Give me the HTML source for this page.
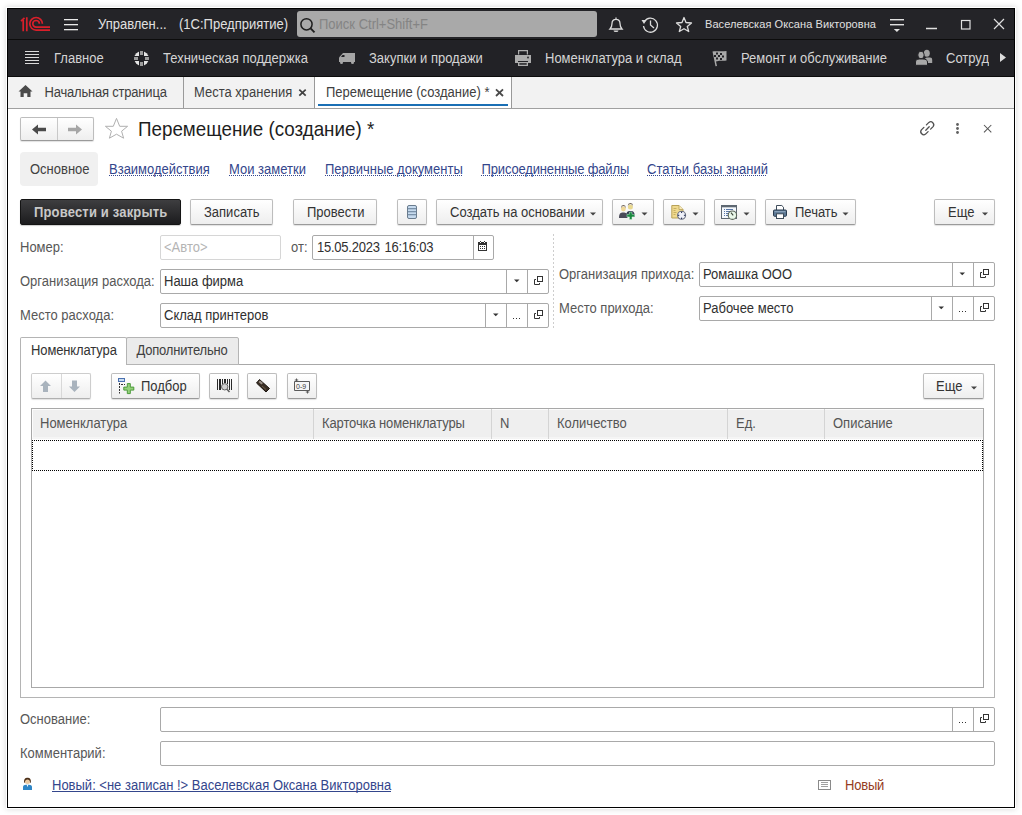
<!DOCTYPE html>
<html><head><meta charset="utf-8">
<style>
*{box-sizing:border-box}
html,body{margin:0;padding:0}
body{width:1022px;height:815px;position:relative;overflow:hidden;background:#fff;font-family:"Liberation Sans",sans-serif;font-size:13px;color:#333}
.a{position:absolute}
.t{position:absolute;white-space:nowrap;line-height:16px;font-size:13px;transform:scaleY(1.1);transform-origin:0 3.5px}
svg{position:absolute;overflow:visible}
.btn{position:absolute;border:1px solid #bdbdbd;border-bottom-color:#9a9a9a;border-radius:2px;background:linear-gradient(#ffffff,#eeeeee);box-shadow:0 1px 1px rgba(0,0,0,.12)}
.fld{position:absolute;border:1px solid #a9a9a9;border-radius:2px;background:#fff}
.dv{position:absolute;top:0;bottom:0;width:1px;background:#a9a9a9}
.lnk{color:#34468c}
.ul{position:absolute;height:1px;background:repeating-linear-gradient(90deg,#34468c 0 1px,transparent 1px 2px)}
.lbl{color:#575757}
</style></head><body>
<!-- window shadow + frame -->
<div class="a" style="left:7px;top:8px;width:1008px;height:800px;border:1px solid #000;background:#fff;box-shadow:0 0 0 1px #fff,0 0 6px 1px rgba(0,0,0,.16)"></div>

<!-- title bar -->
<div class="a" style="left:8px;top:9px;width:1006px;height:30px;background:#242428"></div>
<div class="a" style="left:8px;top:39px;width:1006px;height:1px;background:#0c0c0c"></div>
<!-- menu bar -->
<div class="a" style="left:8px;top:40px;width:1006px;height:36px;background:#222226"></div>
<div class="a" style="left:8px;top:76px;width:1006px;height:1px;background:#0c0c0c"></div>
<!-- tab bar -->
<div class="a" style="left:8px;top:77px;width:1006px;height:31px;background:#f2f2f2"></div>
<div class="a" style="left:8px;top:108px;width:1006px;height:1px;background:#a0a0a0"></div>

<!-- 1C logo -->
<svg class="a" style="left:0;top:0" width="1" height="1">
<g fill="none" stroke="#d91f2a" stroke-width="1.7">
<path d="M23.2 20 V31.2 M26.8 17.2 V31.2"/>
<path d="M21 21.2 L24.5 17.8"/>
<path d="M42.4 23.8 A6.3 6.3 0 1 0 36.1 30.1 H50"/>
<path d="M39.4 23.8 A3.3 3.3 0 1 0 36.1 27.1 H50"/>
</g>
</svg>
<!-- hamburger -->
<svg class="a" style="left:0;top:0" width="1" height="1"><g fill="#eaeaea"><rect x="64" y="19" width="14" height="1.3"/><rect x="64" y="24" width="14" height="1.3"/><rect x="64" y="29" width="14" height="1.3"/></g></svg>
<div class="t" style="left:98px;top:16px;color:#e0e0e0">Управлен...</div>
<div class="t" style="left:179px;top:16px;color:#e0e0e0">(1С:Предприятие)</div>
<!-- search -->
<div class="a" style="left:297px;top:11px;width:300px;height:26px;background:#a9a9a9;border-radius:3px"></div>
<svg class="a" style="left:0;top:0" width="1" height="1"><g fill="none" stroke="#1e1e1e" stroke-width="1.5"><circle cx="306.5" cy="24.3" r="5.6"/><path d="M310.6 28.4 L314.5 32.3" stroke-width="1.9"/></g></svg>
<div class="t" style="left:319px;top:16px;color:#848484">Поиск Ctrl+Shift+F</div>
<!-- bell -->
<svg class="a" style="left:0;top:0" width="1" height="1"><g fill="none" stroke="#dcdcdc" stroke-width="1.3"><path d="M616 17.5 V19 M610 29 C612 27 612 25 612 23.5 C612 21 613.8 19.3 616 19.3 C618.2 19.3 620 21 620 23.5 C620 25 620 27 622 29 Z"/></g><path d="M613.5 30.5 H618.5 A2.5 1.5 0 0 1 613.5 30.5Z" fill="#dcdcdc"/></svg>
<!-- history -->
<svg class="a" style="left:0;top:0" width="1" height="1"><g fill="none" stroke="#dcdcdc" stroke-width="1.3"><path d="M644.5 21.5 A7 7 0 1 1 643.5 26"/><path d="M650.5 20.5 V25 L654 28"/></g><path d="M641.5 20 L646.5 20 L644 24 Z" fill="#dcdcdc"/></svg>
<!-- star -->
<svg class="a" style="left:0;top:0" width="1" height="1"><path d="M684 17.5 L686 22.5 L691.5 23 L687.3 26.5 L688.7 31.5 L684 28.7 L679.3 31.5 L680.7 26.5 L676.5 23 L682 22.5 Z" fill="none" stroke="#dcdcdc" stroke-width="1.3" stroke-linejoin="round"/></svg>
<div class="t" style="left:705px;top:16px;font-size:11px;color:#e0e0e0;letter-spacing:0.08px;transform:none">Васелевская Оксана Викторовна</div>
<!-- filter icon -->
<svg class="a" style="left:0;top:0" width="1" height="1"><g fill="#e0e0e0"><rect x="890" y="19" width="14" height="1.4"/><rect x="890" y="24" width="14" height="1.4"/><path d="M893.8 29 H900 L896.9 32 Z"/></g></svg>
<!-- window controls -->
<svg class="a" style="left:0;top:0" width="1" height="1"><g fill="none" stroke="#e0e0e0" stroke-width="1.2"><path d="M926 28.5 H937" stroke-width="1.5"/><rect x="961.5" y="20.5" width="8.5" height="8.5"/><path d="M994 19 L1004 29 M1004 19 L994 29"/></g></svg>

<!-- menu bar -->
<svg class="a" style="left:0;top:0" width="1" height="1"><g fill="#dadada"><rect x="25" y="51" width="14" height="1"/><rect x="25" y="54" width="14" height="1"/><rect x="25" y="57" width="14" height="1"/><rect x="25" y="60" width="14" height="1"/><rect x="25" y="63" width="14" height="1"/></g></svg>
<div class="t" style="left:54px;top:50px;color:#d4d4d4">Главное</div>
<!-- lifebuoy -->
<svg class="a" style="left:0;top:0" width="1" height="1"><circle cx="141.5" cy="58.5" r="7.3" fill="#e4e4e4"/><g fill="#222226"><rect x="139" y="50" width="5" height="17"/><rect x="133" y="56" width="17" height="5"/></g><g fill="#9c9c9c"><rect x="140" y="51" width="3" height="4"/><rect x="140" y="62" width="3" height="4"/><rect x="134" y="57" width="4" height="3"/><rect x="145" y="57" width="4" height="3"/></g></svg>
<div class="t" style="left:163px;top:50px;color:#d4d4d4">Техническая поддержка</div>
<!-- truck -->
<svg class="a" style="left:0;top:0" width="1" height="1"><path d="M343 53 H355 V62 H339 V57.5 Z" fill="#a6a6a6"/><path d="M342.5 55 H344.5 V57 H341 Z" fill="#222226"/><circle cx="341.5" cy="62.5" r="1.5" fill="#a6a6a6"/><circle cx="352.5" cy="62.5" r="1.5" fill="#a6a6a6"/></svg>
<div class="t" style="left:369px;top:50px;color:#d4d4d4">Закупки и продажи</div>
<!-- printer -->
<svg class="a" style="left:0;top:0" width="1" height="1"><g fill="#acacac"><path d="M518 50 H528 V54.5 H526.8 V51.2 H519.2 V54.5 H518Z"/><path d="M515 55 H531 V63 H528 V61 H518 V63 H515Z"/><path d="M518 62 H528 V66 H518Z"/></g><rect x="519.3" y="63.2" width="7.4" height="1.5" fill="#222226"/><circle cx="528" cy="57.5" r="0.9" fill="#222226"/></svg>
<div class="t" style="left:545px;top:50px;color:#d4d4d4">Номенклатура и склад</div>
<!-- flag -->
<svg class="a" style="left:0;top:0" width="1" height="1"><path d="M712.5 51.5 C716 50.5 720 52 726.5 51 V60.5 C722 61 719 60 716 61.5 L717 66 L715.5 66.2 Z" fill="#a8a8a8"/><g fill="#222226"><rect x="716" y="52.5" width="2" height="2"/><rect x="720" y="53" width="2" height="2"/><rect x="714" y="55" width="2" height="2"/><rect x="718" y="55" width="2" height="2"/><rect x="722" y="55.5" width="2" height="2"/><rect x="716" y="57.5" width="2" height="2"/><rect x="720" y="58" width="2" height="2"/></g></svg>
<div class="t" style="left:741px;top:50px;color:#d4d4d4">Ремонт и обслуживание</div>
<!-- people -->
<svg class="a" style="left:0;top:0" width="1" height="1"><g fill="#a2a2a2"><ellipse cx="926.8" cy="53.3" rx="3" ry="3.5"/><path d="M925 63 V59.5 C925 58 926 57.5 928 57.5 H930 C931.5 57.5 932.2 58.3 932.2 60 V63Z"/></g><g fill="#a8a8a8" stroke="#222226" stroke-width="1"><ellipse cx="921" cy="55" rx="3.2" ry="3.8"/><path d="M915.5 65.3 V62 C915.5 60 917 59 919.5 59 H923 C925.5 59 927.5 60 927.5 62 V65.3Z"/></g></svg>
<div class="t" style="left:946px;top:50px;color:#d4d4d4;width:43px;overflow:hidden">Сотрудники</div>
<svg class="a" style="left:0;top:0" width="1" height="1"><path d="M1000 53 L1006 57.5 L1000 62 Z" fill="#dcdcdc"/></svg>

<!-- tabs -->
<svg class="a" style="left:0;top:0" width="1" height="1"><path d="M25.5 85 L32.5 91.5 H30.5 V97 H27.3 V93.3 H23.7 V97 H20.5 V91.5 H18.5 Z" fill="#4a4a4a"/></svg>
<div class="t" style="left:44.5px;top:84px;color:#404040;letter-spacing:-0.2px">Начальная страница</div>
<div class="a" style="left:183px;top:77px;width:1px;height:31px;background:#9a9a9a"></div>
<div class="t" style="left:194px;top:84px;color:#404040">Места хранения</div>
<svg class="a" style="left:0;top:0" width="1" height="1"><path d="M299.3 89.6 L305.7 95.7 M305.7 89.6 L299.3 95.7" stroke="#404040" stroke-width="1.7"/></svg>
<div class="a" style="left:314px;top:77px;width:1px;height:31px;background:#999"></div>
<div class="a" style="left:315px;top:77px;width:196px;height:31px;background:#fff"></div>
<div class="a" style="left:318px;top:104px;width:190px;height:2px;background:#1a6fb5"></div>
<div class="a" style="left:511px;top:77px;width:1px;height:31px;background:#999"></div>
<div class="t" style="left:326px;top:84px;color:#404040">Перемещение (создание) *</div>
<svg class="a" style="left:0;top:0" width="1" height="1"><path d="M496 89.3 L503 96 M503 89.3 L496 96" stroke="#4a4a4a" stroke-width="1.8"/></svg>

<!-- form header -->
<div class="btn" style="left:20px;top:117px;width:74px;height:24px;"></div>
<div class="a" style="left:57px;top:118px;width:1px;height:22px;background:#c8c8c8"></div>
<svg class="a" style="left:0;top:0" width="1" height="1"><path d="M32 129.5 L38 124.5 V127.8 H46 V131.2 H38 V134.5 Z" fill="#4a4a4a"/><path d="M82 129.5 L76 124.5 V127.8 H68 V131.2 H76 V134.5 Z" fill="#a6a6a6"/></svg>
<svg class="a" style="left:0;top:0" width="1" height="1"><path d="M116.5 118.4 L119.7 126.3 L127.6 126.3 L121.6 131.2 L123.6 138.2 L116.5 134.2 L109.4 138.2 L111.4 131.2 L105.4 126.3 L113.3 126.3 Z" fill="none" stroke="#b0b0b0" stroke-width="1" stroke-linejoin="miter"/></svg>
<div class="t" style="left:138px;top:118px;font-size:18.8px;line-height:22px;color:#1e1e1e">Перемещение (создание) *</div>
<!-- link icon -->
<svg class="a" style="left:0;top:0" width="1" height="1"><g fill="none" stroke="#505050" stroke-width="1.3" stroke-linecap="round"><path d="M926.4 124.9 L928.9 122.4 A3 3 0 0 1 933.1 126.6 L930.6 129.1"/><path d="M928.1 131.6 L925.6 134.1 A3 3 0 0 1 921.4 129.9 L923.9 127.4"/><path d="M925.8 130.2 L929.2 126.8"/></g></svg>
<svg class="a" style="left:0;top:0" width="1" height="1"><g fill="#606060"><circle cx="957.5" cy="124.5" r="1.4"/><circle cx="957.5" cy="128.5" r="1.4"/><circle cx="957.5" cy="132.5" r="1.4"/></g></svg>
<svg class="a" style="left:0;top:0" width="1" height="1"><path d="M984 125 L991.3 132.3 M991.3 125 L984 132.3" stroke="#555" stroke-width="1.05"/></svg>

<!-- nav section -->
<div class="a" style="left:20px;top:152px;width:78px;height:34px;background:#f0f0f0;border-radius:4px"></div>
<div class="t" style="left:30px;top:161px;color:#404040">Основное</div>
<div class="t lnk" style="left:109px;top:161px;line-height:12px;padding-top:2px">Взаимодействия</div>
<div class="t lnk" style="left:229px;top:161px;line-height:12px;padding-top:2px">Мои заметки</div>
<div class="t lnk" style="left:325px;top:161px;line-height:12px;padding-top:2px">Первичные документы</div>
<div class="t lnk" style="left:481.5px;top:161px;line-height:12px;padding-top:2px;letter-spacing:-0.15px">Присоединенные файлы</div>
<div class="t lnk" style="left:647px;top:161px;line-height:12px;padding-top:2px">Статьи базы знаний</div>

<div class="ul" style="left:109px;top:175px;width:100px"></div>
<div class="ul" style="left:229px;top:175px;width:76px"></div>
<div class="ul" style="left:325px;top:175px;width:137px"></div>
<div class="ul" style="left:481px;top:175px;width:147px"></div>
<div class="ul" style="left:647px;top:175px;width:120px"></div>
<!-- command bar -->
<div class="a" style="left:20px;top:199px;width:161px;height:26px;border-radius:2px;background:linear-gradient(#3e3e40,#1c1c1e);border:1px solid #141414;box-shadow:0 1px 1px rgba(0,0,0,.2)"></div>
<div class="t" style="left:34px;top:204px;font-weight:bold;color:#c8c8c8;letter-spacing:0.17px">Провести и закрыть</div>
<div class="btn" style="left:190px;top:199px;width:83px;height:26px"></div>
<div class="t" style="left:204px;top:204px;color:#333">Записать</div>
<div class="btn" style="left:293px;top:199px;width:84px;height:26px"></div>
<div class="t" style="left:307px;top:204px;color:#333">Провести</div>
<div class="btn" style="left:397px;top:199px;width:30px;height:26px"></div>
<svg class="a" style="left:0;top:0" width="1" height="1"><rect x="407.5" y="205.5" width="9" height="13" rx="1.5" fill="#c6daee" stroke="#6a7c8e" stroke-width="1"/><g fill="#7a92aa"><rect x="408" y="208" width="8" height="1.3"/><rect x="408" y="211" width="8" height="1.3"/><rect x="408" y="214" width="8" height="1.3"/></g></svg>
<div class="btn" style="left:436px;top:199px;width:167px;height:26px"></div>
<div class="t" style="left:450px;top:204px;color:#333">Создать на основании</div>
<div class="btn" style="left:612px;top:199px;width:42px;height:26px"></div>
<div class="btn" style="left:663px;top:199px;width:42px;height:26px"></div>
<div class="btn" style="left:714px;top:199px;width:42px;height:26px"></div>
<div class="btn" style="left:765px;top:199px;width:91px;height:26px"></div>
<div class="t" style="left:795px;top:204px;color:#333">Печать</div>
<div class="btn" style="left:934px;top:199px;width:61px;height:26px"></div>
<div class="t" style="left:948px;top:204px;color:#333">Еще</div>
<svg class="a" style="left:0;top:0" width="1" height="1"><g fill="#444"><path d="M590 212.5 H596 L593 215.5Z"/><path d="M641.5 212.5 H647.5 L644.5 215.5Z"/><path d="M692.5 212.5 H698.5 L695.5 215.5Z"/><path d="M743.5 212.5 H749.5 L746.5 215.5Z"/><path d="M842.5 212.5 H848.5 L845.5 215.5Z"/><path d="M982 212.5 H988 L985 215.5Z"/></g></svg>
<!-- users-add icon -->
<svg class="a" style="left:0;top:0" width="1" height="1">
<path d="M619 218 C619 213.5 620.5 212.5 623.3 212.5 C626 212.5 627.5 213.5 627.5 218Z" fill="#4a4a58"/>
<circle cx="623.4" cy="209" r="2.4" fill="#f0d898"/><path d="M621 208.5 A2.4 2.4 0 0 1 625.8 208.5 L625.8 207.5 A2.4 2.2 0 0 0 621 207.5Z" fill="#3a2a1a"/>
<path d="M626 217 C626 212 627.5 211 630.4 211 C633.3 211 634.8 212 634.8 217Z" fill="#2a3448"/>
<circle cx="630.4" cy="207" r="2.5" fill="#e8d890"/><path d="M627.9 206.6 A2.5 2.5 0 0 1 632.9 206.6 L632.9 205.5 A2.5 2.3 0 0 0 627.9 205.5Z" fill="#3a2a1a"/>
<path d="M629.4 212 H632 V214.3 H634.5 V216.9 H632 V219.5 H629.4 V216.9 H626.9 V214.3 H629.4Z" fill="#1a8a40" stroke="#d8f0e0" stroke-width=".5"/>
</svg>
<!-- doc-clock icon -->
<svg class="a" style="left:0;top:0" width="1" height="1">
<path d="M671.8 205.5 H679 L683 209.5 V218 H671.8Z" fill="#efd98e" stroke="#b8a258" stroke-width="1"/>
<path d="M679 205.5 V209.5 H683" fill="#f8ecc0" stroke="#b8a258" stroke-width=".8"/>
<g fill="#c8b060"><rect x="673.5" y="208" width="3" height="1"/><rect x="673.5" y="210" width="2" height="1"/><rect x="673.5" y="212" width="3" height="1"/><rect x="673.5" y="214" width="2" height="1"/></g>
<circle cx="681.6" cy="215.3" r="4" fill="#eef0f8" stroke="#6a7080" stroke-width="1.1"/>
<g fill="#1e2a50"><rect x="681.1" y="211.6" width="1" height="1.4"/><rect x="681.1" y="217.6" width="1" height="1.4"/><rect x="677.9" y="214.8" width="1.4" height="1"/><rect x="683.9" y="214.8" width="1.4" height="1"/></g>
</svg>
<!-- list-clock icon -->
<svg class="a" style="left:0;top:0" width="1" height="1">
<rect x="721.5" y="205.5" width="15" height="13" fill="#f4f8fc" stroke="#5e6872" stroke-width="1"/>
<rect x="721.5" y="205.5" width="15" height="1.8" fill="#5e6872"/>
<g fill="#5a78a8"><rect x="724" y="209" width="1" height="1"/><rect x="726" y="209" width="7" height="1"/><rect x="724" y="211" width="1" height="1"/><rect x="726" y="211" width="4" height="1"/><rect x="724" y="213" width="1" height="1"/><rect x="726" y="213" width="3" height="1"/><rect x="724" y="215" width="1" height="1"/><rect x="726" y="215" width="2" height="1"/></g>
<circle cx="732.4" cy="215.2" r="4.2" fill="#eaf8ea" stroke="#5a6458" stroke-width="1.1"/>
<path d="M731 212.6 L733.2 215.4" stroke="#3a4438" stroke-width="1.1" fill="none"/>
</svg>
<!-- printer icon -->
<svg class="a" style="left:0;top:0" width="1" height="1">
<path d="M776.5 210 V205.5 H781.8 L783.5 207.2 V210" fill="#fff" stroke="#3e4c5a" stroke-width="1"/>
<rect x="773.5" y="210" width="13" height="6.3" rx="1" fill="#5c7894" stroke="#2a3c50" stroke-width="1"/>
<rect x="774.5" y="211" width="11" height="1.2" fill="#8aa2ba"/>
<rect x="776.5" y="213.8" width="7" height="4.7" fill="#fff" stroke="#3e4c5a" stroke-width="1"/>
</svg>

<!-- fields -->
<div class="t lbl" style="left:20px;top:239px">Номер:</div>
<div class="fld" style="left:160px;top:235px;width:121px;height:25px;border-color:#d6d6d6"></div>
<div class="t" style="left:164px;top:239px;color:#b4b4b4">&lt;Авто&gt;</div>
<div class="t lbl" style="left:291px;top:239px">от:</div>
<div class="fld" style="left:312px;top:235px;width:182px;height:25px">
  <div class="dv" style="left:160px"></div>
</div>
<div class="t" style="left:317px;top:239px;color:#303030;letter-spacing:-0.24px;word-spacing:1.4px">15.05.2023 16:16:03</div>
<svg class="a" style="left:0;top:0" width="1" height="1"><g fill="#333"><rect x="478" y="242" width="9" height="9"/><rect x="480" y="241" width="1" height="1"/><rect x="484" y="241" width="1" height="1"/></g><g fill="#fff"><rect x="479" y="245" width="7" height="5"/><rect x="480" y="242" width="1" height="1"/><rect x="484" y="242" width="1" height="1"/></g><g fill="#333"><rect x="480" y="246" width="1" height="1"/><rect x="482" y="246" width="1" height="1"/><rect x="484" y="246" width="1" height="1"/><rect x="480" y="248" width="1" height="1"/><rect x="482" y="248" width="1" height="1"/><rect x="484" y="248" width="1" height="1"/></g></svg>

<div class="t lbl" style="left:20px;top:273px">Организация расхода:</div>
<div class="fld" style="left:160px;top:269px;width:389px;height:25px">
  <div class="dv" style="left:345px"></div><div class="dv" style="left:366px"></div>
</div>
<div class="t" style="left:164px;top:273px;color:#303030">Наша фирма</div>

<div class="t lbl" style="left:20px;top:307px">Место расхода:</div>
<div class="fld" style="left:160px;top:303px;width:389px;height:25px">
  <div class="dv" style="left:324px"></div><div class="dv" style="left:345px"></div><div class="dv" style="left:366px"></div>
</div>
<div class="t" style="left:164px;top:307px;color:#303030">Склад принтеров</div>

<div class="a" style="left:553px;top:234px;width:1px;height:94px;background:repeating-linear-gradient(#cdcdcd 0 2px,transparent 2px 4px)"></div>

<div class="t lbl" style="left:559px;top:266px">Организация прихода:</div>
<div class="fld" style="left:699px;top:262px;width:296px;height:25px">
  <div class="dv" style="left:252px"></div><div class="dv" style="left:273px"></div>
</div>
<div class="t" style="left:703px;top:266px;color:#303030">Ромашка ООО</div>

<div class="t lbl" style="left:559px;top:300px">Место прихода:</div>
<div class="fld" style="left:699px;top:296px;width:296px;height:25px">
  <div class="dv" style="left:231px"></div><div class="dv" style="left:252px"></div><div class="dv" style="left:273px"></div>
</div>
<div class="t" style="left:703px;top:300px;color:#303030">Рабочее место</div>

<!-- field button glyphs -->
<svg class="a" style="left:0;top:0" width="1" height="1"><g fill="#333">
<path d="M514 279.5 H519.5 L516.75 282.3Z"/>
<path d="M493 313.5 H498.5 L495.75 316.3Z"/>
<path d="M959.5 272.5 H965 L962.25 275.3Z"/>
<path d="M938.5 306.5 H944 L941.25 309.3Z"/>
<rect x="513" y="318" width="1" height="1"/><rect x="516" y="318" width="1" height="1"/><rect x="519" y="318" width="1" height="1"/>
<rect x="959" y="311" width="1" height="1"/><rect x="962" y="311" width="1" height="1"/><rect x="965" y="311" width="1" height="1"/>
</g>
<g fill="none" stroke="#333" stroke-width="1">




</g></svg>

<svg class="a" style="left:0;top:0" width="1" height="1"><g fill="none" stroke="#333" stroke-width="1"><path d="M536 279.5 H534.5 V284.5 H539.5 V283"/><rect x="537.5" y="276.5" width="5" height="5"/><path d="M536 313.5 H534.5 V318.5 H539.5 V317"/><rect x="537.5" y="310.5" width="5" height="5"/><path d="M982 272.5 H980.5 V277.5 H985.5 V276"/><rect x="983.5" y="269.5" width="5" height="5"/><path d="M982 306.5 H980.5 V311.5 H985.5 V310"/><rect x="983.5" y="303.5" width="5" height="5"/></g></svg>
<!-- tab panel -->
<div class="a" style="left:20px;top:364px;width:975px;height:334px;border:1px solid #b4b4b4;border-top-color:#a8a8a8"></div>
<div class="a" style="left:126px;top:337px;width:113px;height:28px;border:1px solid #b4b4b4;border-radius:2px 2px 0 0;background:#ebebeb"></div>
<div class="a" style="left:20px;top:337px;width:107px;height:28px;border:1px solid #b4b4b4;border-bottom:none;border-radius:2px 2px 0 0;background:#fff"></div>
<div class="t" style="left:31px;top:342px;color:#333;letter-spacing:-0.12px">Номенклатура</div>
<div class="t" style="left:136.5px;top:342px;color:#404040;letter-spacing:-0.2px">Дополнительно</div>

<!-- table toolbar -->
<div class="btn" style="left:31px;top:373px;width:60px;height:26px;border-color:#cdcdcd;border-bottom-color:#b0b0b0"></div>
<div class="a" style="left:61px;top:374px;width:1px;height:24px;background:#d8d8d8"></div>
<svg class="a" style="left:0;top:0" width="1" height="1"><g fill="#a9b3bd"><path d="M45.5 380.5 L51 386 H48 V392 H43 V386 H40Z"/><path d="M74.5 392 L80 386.5 H77 V380.5 H72 V386.5 H69Z"/></g></svg>
<div class="btn" style="left:111px;top:373px;width:89px;height:26px"></div>
<svg class="a" style="left:0;top:0" width="1" height="1">
<rect x="118.5" y="378.5" width="6" height="3" fill="#c8dcf0" stroke="#4a70b0" stroke-width="1"/>
<g fill="#333"><rect x="119" y="383" width="1" height="2"/><rect x="119" y="386" width="1" height="2"/><rect x="119" y="389" width="1" height="2"/><rect x="119" y="392" width="1" height="1.5"/><rect x="121" y="384" width="2" height="1"/><rect x="124" y="384" width="1" height="1"/></g>
<path d="M127.3 383.6 H130.3 V387.1 H133.8 V390.1 H130.3 V393.6 H127.3 V390.1 H123.8 V387.1 H127.3Z" fill="#94d07a" stroke="#4a9a3a" stroke-width="1"/>
</svg>
<div class="t" style="left:141px;top:378px;color:#333">Подбор</div>
<div class="btn" style="left:209px;top:373px;width:30px;height:26px"></div>
<svg class="a" style="left:0;top:0" width="1" height="1"><g fill="#2a2a2a"><rect x="217" y="379" width="1" height="11"/><rect x="219" y="379" width="2" height="11"/><rect x="222" y="379" width="1" height="5"/><rect x="224" y="379" width="2" height="4"/><rect x="227" y="379" width="1" height="5"/><rect x="229" y="379" width="1" height="11"/><rect x="231" y="379" width="1" height="11"/></g><circle cx="224.7" cy="386.8" r="3.2" fill="#d0d0d0" stroke="#606060" stroke-width="1"/><path d="M227 389.2 L229.5 392" stroke="#606060" stroke-width="1.6"/></svg>
<div class="btn" style="left:247px;top:373px;width:30px;height:26px"></div>
<svg class="a" style="left:0;top:0" width="1" height="1"><path d="M256.5 383 L259.5 379.5 L269.5 388.5 L266 392Z" fill="#3a2e24" stroke="#1a140e" stroke-width="1" stroke-linejoin="round"/><path d="M258.5 382 L260 380.5 L263 383 L261.5 384.5Z" fill="#9a9088"/><path d="M262 386 L266 389.5" stroke="#6a5a48" stroke-width="1"/></svg>
<div class="btn" style="left:287px;top:373px;width:30px;height:26px"></div>
<svg class="a" style="left:0;top:0" width="1" height="1"><path d="M294.5 381.5 H309.5 V390.5 H294.5Z" fill="#f6f6f6" stroke="#5a5a5a" stroke-width="1"/><path d="M296.5 378.5 V382 M294.8 380 H298.2 M307.5 390 V393.5 M305.8 392 H309.2" stroke="#5a5a5a" stroke-width="1"/><text x="296" y="389" font-size="7" font-family="Liberation Sans" fill="#3a3a3a">0-9</text></svg>
<div class="btn" style="left:923px;top:373px;width:61px;height:26px"></div>
<div class="t" style="left:936px;top:378px;color:#333">Еще</div>
<svg class="a" style="left:0;top:0" width="1" height="1"><path d="M971 386.5 H977 L974 389.5Z" fill="#444"/></svg>

<!-- table -->
<div class="a" style="left:31px;top:408px;width:953px;height:280px;border:1px solid #a8a8a8;background:#fff"></div>
<div class="a" style="left:32px;top:409px;width:951px;height:30px;background:#efefef;border-top:1px solid #fcfcfc;border-left:1px solid #fcfcfc;border-bottom:2px solid #f5f5f5"></div>
<div class="a" style="left:313px;top:409px;width:1px;height:30px;background:#d4d4d4"></div>
<div class="a" style="left:491px;top:409px;width:1px;height:30px;background:#d4d4d4"></div>
<div class="a" style="left:548px;top:409px;width:1px;height:30px;background:#d4d4d4"></div>
<div class="a" style="left:727px;top:409px;width:1px;height:30px;background:#d4d4d4"></div>
<div class="a" style="left:824px;top:409px;width:1px;height:30px;background:#d4d4d4"></div>
<div class="t" style="left:40px;top:415px;color:#555">Номенклатура</div>
<div class="t" style="left:322px;top:415px;color:#555;letter-spacing:-0.12px">Карточка номенклатуры</div>
<div class="t" style="left:500px;top:415px;color:#555">N</div>
<div class="t" style="left:557px;top:415px;color:#555">Количество</div>
<div class="t" style="left:736px;top:415px;color:#555">Ед.</div>
<div class="t" style="left:833px;top:415px;color:#555">Описание</div>
<div class="a" style="left:32px;top:440px;width:951px;height:31px;border:1px dotted #000"></div>

<!-- bottom fields -->
<div class="t lbl" style="left:20px;top:711px">Основание:</div>
<div class="fld" style="left:160px;top:707px;width:835px;height:25px">
  <div class="dv" style="left:791px"></div><div class="dv" style="left:812px"></div>
</div>
<svg class="a" style="left:0;top:0" width="1" height="1"><g fill="#333"><rect x="959" y="722" width="1" height="1"/><rect x="962" y="722" width="1" height="1"/><rect x="965" y="722" width="1" height="1"/></g><g fill="none" stroke="#333" stroke-width="1"><path d="M982 717.5 H980.5 V722.5 H985.5 V721"/><rect x="983.5" y="714.5" width="5" height="5"/></g></svg>
<div class="t lbl" style="left:20px;top:745px">Комментарий:</div>
<div class="fld" style="left:160px;top:741px;width:835px;height:25px"></div>

<!-- footer -->
<svg class="a" style="left:0;top:0" width="1" height="1"><path d="M23 790 V787 C23 785.5 24.5 784.7 26 784.7 H29 C30.5 784.7 32 785.5 32 787 V790Z" fill="#2f86c6"/><path d="M26.7 784.7 L27.5 787.3 L28.3 784.7Z" fill="#fff"/><circle cx="27.5" cy="781" r="3" fill="#ecc9a0"/><path d="M24.2 782.8 C23.7 779 25.5 777.8 27.5 777.8 C29.5 777.8 31.3 779 30.8 782.8 L30.1 782.8 C30.1 780.6 29 779.5 27.5 779.5 C26 779.5 24.9 780.6 24.9 782.8Z" fill="#4a2e18"/></svg>
<div class="t" style="left:52px;top:777px;color:#34468c">Новый: &lt;не записан !&gt; Васелевская Оксана Викторовна</div>
<div class="a" style="left:52px;top:791px;width:339px;height:1px;background:#34468c"></div>
<svg class="a" style="left:0;top:0" width="1" height="1"><rect x="818.5" y="780.5" width="12" height="9" fill="#fff" stroke="#8a8a8a" stroke-width="1"/><g fill="#a0a0a0"><rect x="821" y="782" width="7" height="1"/><rect x="821" y="784" width="7" height="1"/><rect x="821" y="786" width="7" height="1"/></g></svg>
<div class="t" style="left:845px;top:777px;color:#953c22;letter-spacing:-0.2px">Новый</div>

</body></html>
